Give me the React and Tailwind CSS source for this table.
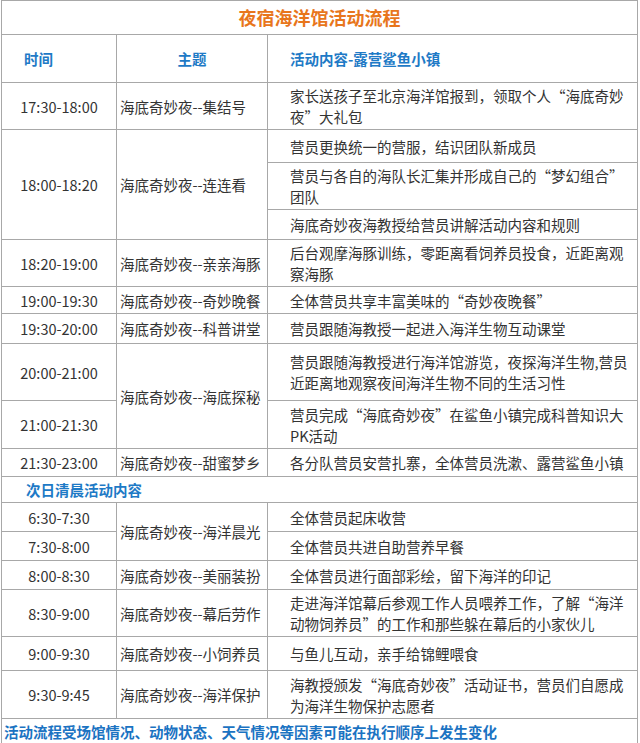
import React from "react";

const cell = "border border-[#a8a8a8] align-middle";

const Time = ({ t, rowSpan }) => (
  <td rowSpan={rowSpan} className={`${cell} text-center`}>
    {t}
  </td>
);

const Topic = ({ t, rowSpan }) => (
  <td rowSpan={rowSpan} className={`${cell} pl-[3px] whitespace-nowrap`}>
    {t}
  </td>
);

const Content = ({ lines }) => (
  <td className={`${cell} pl-[22px] pr-1 whitespace-nowrap`}>
    {lines.map((l, i) => (
      <div key={i}>{l}</div>
    ))}
  </td>
);

export default function App() {
  return (
    <div
      className="h-[743px] w-[640px] overflow-hidden bg-white text-[14.5px] leading-[21px] text-[#333]"
      style={{ fontFamily: '"Noto Sans CJK SC", "Noto Sans", sans-serif' }}
    >
      <table className="ml-px w-[637px] table-fixed border-collapse">
        <colgroup>
          <col className="w-[115px]" />
          <col className="w-[151px]" />
          <col />
        </colgroup>
        <tbody>
          <tr className="h-[34px]">
            <td colSpan={3} className={`${cell} text-center text-[18px] font-bold text-[#e8761c]`}>
              夜宿海洋馆活动流程
            </td>
          </tr>
          <tr className="h-[48px] font-bold text-[#1e7ac6]">
            <td className={`${cell} pl-[22px]`}>时间</td>
            <td className={`${cell} text-center`}>主题</td>
            <td className={`${cell} pl-[22px]`}>活动内容-露营鲨鱼小镇</td>
          </tr>
          <tr className="h-[47px]">
            <Time t="17:30-18:00" />
            <Topic t="海底奇妙夜--集结号" />
            <Content lines={["家长送孩子至北京海洋馆报到，领取个人“海底奇妙", "夜”大礼包"]} />
          </tr>
          <tr className="h-[33px]">
            <Time t="18:00-18:20" rowSpan={3} />
            <Topic t="海底奇妙夜--连连看" rowSpan={3} />
            <Content lines={["营员更换统一的营服，结识团队新成员"]} />
          </tr>
          <tr className="h-[47px]">
            <Content lines={["营员与各自的海队长汇集并形成自己的“梦幻组合”", "团队"]} />
          </tr>
          <tr className="h-[30px]">
            <Content lines={["海底奇妙夜海教授给营员讲解活动内容和规则"]} />
          </tr>
          <tr className="h-[47px]">
            <Time t="18:20-19:00" />
            <Topic t="海底奇妙夜--亲亲海豚" />
            <Content lines={["后台观摩海豚训练，零距离看饲养员投食，近距离观", "察海豚"]} />
          </tr>
          <tr className="h-[27px]">
            <Time t="19:00-19:30" />
            <Topic t="海底奇妙夜--奇妙晚餐" />
            <Content lines={["全体营员共享丰富美味的“奇妙夜晚餐”"]} />
          </tr>
          <tr className="h-[30px]">
            <Time t="19:30-20:00" />
            <Topic t="海底奇妙夜--科普讲堂" />
            <Content lines={["营员跟随海教授一起进入海洋生物互动课堂"]} />
          </tr>
          <tr className="h-[57px]">
            <Time t="20:00-21:00" />
            <Topic t="海底奇妙夜--海底探秘" rowSpan={2} />
            <Content lines={["营员跟随海教授进行海洋馆游览，夜探海洋生物,营员", "近距离地观察夜间海洋生物不同的生活习性"]} />
          </tr>
          <tr className="h-[48px]">
            <Time t="21:00-21:30" />
            <Content lines={["营员完成“海底奇妙夜”在鲨鱼小镇完成科普知识大", "PK活动"]} />
          </tr>
          <tr className="h-[28px]">
            <Time t="21:30-23:00" />
            <Topic t="海底奇妙夜--甜蜜梦乡" />
            <Content lines={["各分队营员安营扎寨，全体营员洗漱、露营鲨鱼小镇"]} />
          </tr>
          <tr className="h-[26px]">
            <td colSpan={3} className={`${cell} pl-[24px] font-bold text-[#1e7ac6]`}>
              次日清晨活动内容
            </td>
          </tr>
          <tr className="h-[29px]">
            <Time t="6:30-7:30" />
            <Topic t="海底奇妙夜--海洋晨光" rowSpan={2} />
            <Content lines={["全体营员起床收营"]} />
          </tr>
          <tr className="h-[29px]">
            <Time t="7:30-8:00" />
            <Content lines={["全体营员共进自助营养早餐"]} />
          </tr>
          <tr className="h-[29px]">
            <Time t="8:00-8:30" />
            <Topic t="海底奇妙夜--美丽装扮" />
            <Content lines={["全体营员进行面部彩绘，留下海洋的印记"]} />
          </tr>
          <tr className="h-[47px]">
            <Time t="8:30-9:00" />
            <Topic t="海底奇妙夜--幕后劳作" />
            <Content lines={["走进海洋馆幕后参观工作人员喂养工作，了解“海洋", "动物饲养员”的工作和那些躲在幕后的小家伙儿"]} />
          </tr>
          <tr className="h-[34px]">
            <Time t="9:00-9:30" />
            <Topic t="海底奇妙夜--小饲养员" />
            <Content lines={["与鱼儿互动，亲手给锦鲤喂食"]} />
          </tr>
          <tr className="h-[48px]">
            <Time t="9:30-9:45" />
            <Topic t="海底奇妙夜--海洋保护" />
            <Content lines={["海教授颁发“海底奇妙夜”活动证书，营员们自愿成", "为海洋生物保护志愿者"]} />
          </tr>
          <tr className="h-[26px]">
            <td colSpan={3} className={`${cell} pl-[2px] font-bold text-[#1b73c2]`}>
              活动流程受场馆情况、动物状态、天气情况等因素可能在执行顺序上发生变化
            </td>
          </tr>
        </tbody>
      </table>
    </div>
  );
}
